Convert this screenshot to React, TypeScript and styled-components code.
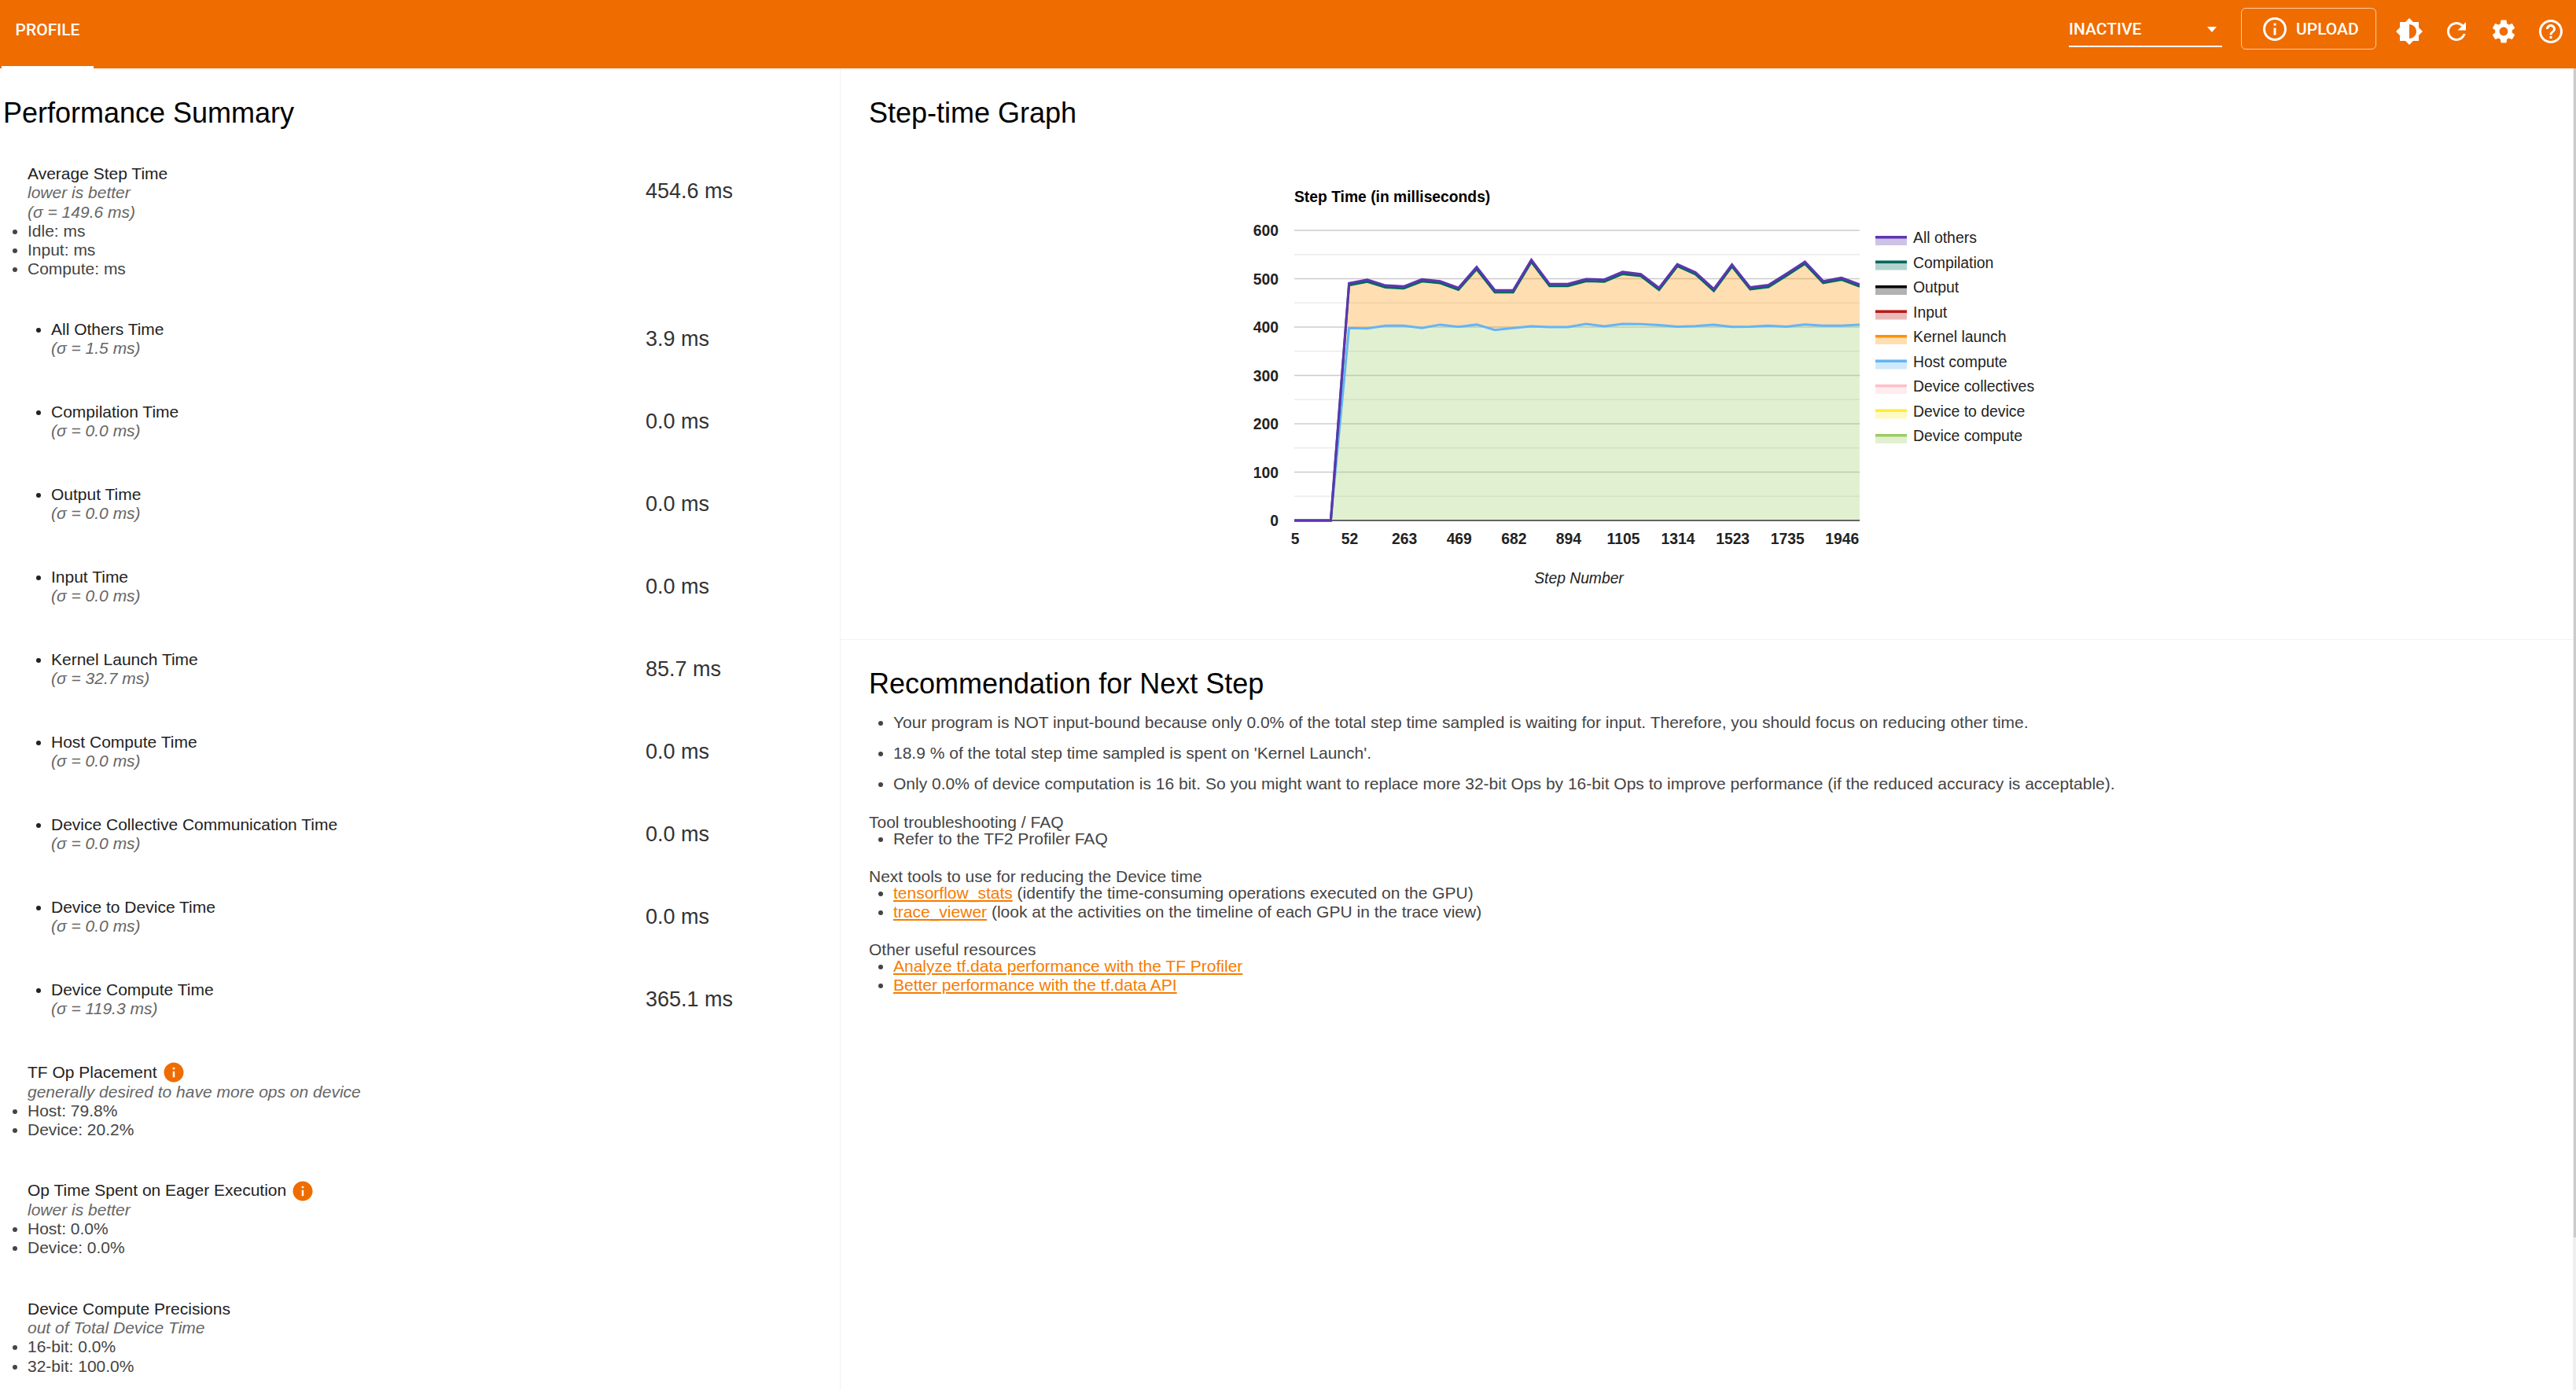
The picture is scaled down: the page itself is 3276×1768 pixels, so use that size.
import React from 'react';
import styled, { createGlobalStyle } from 'styled-components';

const GlobalStyle = createGlobalStyle`
  html, body {
    margin: 0;
    padding: 0;
    background: #fff;
    overflow: hidden;
    font-family: "Liberation Sans", Arial, sans-serif;
  }
`;

const ORANGE = '#ef6c00';

const Shell = styled.div`
  display: flex;
  flex-direction: column;
  height: 1768px;
  overflow: hidden;
`;

const Toolbar = styled.header`
  display: flex;
  justify-content: space-between;
  height: 87px;
  flex: none;
  background: ${ORANGE};
  color: #fff;
  font-family: Roboto, sans-serif;
  font-weight: 500;
`;

const Tab = styled.div`
  width: 117px;
  height: 84px;
  margin-left: 2px;
  border-bottom: 3px solid #fff;
  font-size: 21px;
  line-height: 76px;
  text-align: center;
`;

const ToolbarRight = styled.div`
  display: flex;
  padding-right: 2px;
`;

const RunSelect = styled.div`
  display: flex;
  align-items: center;
  justify-content: space-between;
  box-sizing: border-box;
  width: 195px;
  height: 50px;
  margin: 10px 24px 0 0;
  padding-right: 7px;
  border-bottom: 2px solid #fff;
  font-size: 21px;
  padding-top: 6px;
`;

const DropArrow = styled.span`
  width: 0;
  height: 0;
  border-left: 6.5px solid transparent;
  border-right: 6.5px solid transparent;
  border-top: 7px solid #fff;
`;

const UploadButton = styled.div`
  display: flex;
  align-items: center;
  box-sizing: border-box;
  width: 172px;
  height: 53px;
  margin: 10px 12px 0 0;
  padding-left: 24px;
  gap: 9px;
  border: 1.5px solid rgba(255, 255, 255, 0.65);
  border-radius: 6px;
  font-size: 21px;
`;

const IconButton = styled.div`
  display: flex;
  align-items: center;
  justify-content: center;
  width: 60px;
  height: 80px;
`;

const Glyph = styled.svg`
  display: block;
  width: ${p => p.$size || 36}px;
  height: ${p => p.$size || 36}px;
  fill: ${p => p.$color || '#fff'};
  flex: none;
`;

const Main = styled.main`
  position: relative;
  display: flex;
  flex: 1;
  min-height: 0;
`;

const LeftPanel = styled.section`
  box-sizing: border-box;
  width: 1069px;
  flex: none;
  padding-top: 37px;
  border-right: 1px solid #f2f2f2;
`;

const PanelTitle = styled.h2`
  margin: 0;
  padding-left: ${p => p.$inset || 0}px;
  font-size: 36px;
  font-weight: 400;
  line-height: 40px;
  color: #000;
`;

const Summary = styled.div`
  margin-top: 45px;
  font-size: 21px;
  line-height: 24.3px;
  color: #222;
`;

const AverageRow = styled.div`
  display: grid;
  grid-template-columns: 821px 1fr;
  margin-bottom: 52px;
`;

const StatRows = styled.div`
  display: flex;
  flex-direction: column;
  gap: 56.4px;
  margin-bottom: 57px;
`;

const StatRow = styled.div`
  display: grid;
  grid-template-columns: 821px 1fr;
  align-items: center;
`;

const StatValue = styled.div`
  font-size: 27px;
  line-height: 32px;
  color: #333;
  margin-top: ${p => p.$top || 0}px;
`;

const BlockLabel = styled.div`
  display: flex;
  align-items: center;
  height: 24.3px;
  padding-left: 35px;
`;

const SubNote = styled.div`
  padding-left: ${p => p.$inset || 0}px;
  font-style: italic;
  color: #666;
`;

const DetailList = styled.ul`
  margin: 0;
  padding: 0 0 0 35px;
  color: #444;
`;

const StatList = styled.ul`
  margin: 0;
  padding: 0 0 0 65px;
`;

const BlockStack = styled.div`
  display: flex;
  flex-direction: column;
  gap: 53px;
`;

const InfoBadge = styled.span`
  margin-left: 6px;
`;

const RightPanel = styled.section`
  flex: 1;
  min-width: 0;
`;

const GraphSection = styled.div`
  box-sizing: border-box;
  height: 727px;
  padding: 37px 0 0 36px;
  border-bottom: 1px solid #f2f2f2;
`;

const ChartFrame = styled.svg`
  display: block;
  width: 1100px;
  height: 520px;
  margin: 63px 0 0 455px;
  font-family: "Liberation Sans", Arial, sans-serif;
`;

const RecommendSection = styled.div`
  padding: 36px 0 0 36px;
  font-size: 21px;
  line-height: 24.3px;
  color: #444;
`;

const AdviceList = styled.ul`
  display: flex;
  flex-direction: column;
  gap: 14.7px;
  margin: 17px 0 26.5px;
  padding: 0 0 0 31px;
`;

const ResourceGroups = styled.div`
  display: flex;
  flex-direction: column;
  gap: 25.6px;
`;

const GroupTitle = styled.div`
  line-height: 19px;
`;

const ResourceList = styled.ul`
  margin: 0;
  padding: 0 0 0 31px;
`;

const DocLink = styled.a`
  color: #f57c00;
  text-decoration: underline;
`;

const ScrollTrack = styled.div`
  position: absolute;
  top: 0;
  right: 0;
  bottom: 0;
  width: 4px;
  background: #efefef;
`;

const ScrollThumb = styled.div`
  width: 3px;
  height: 1487px;
  margin-left: 1px;
  background: #cbcbcb;
`;

const PATHS = {
  info: 'M11 7h2v2h-2zm0 4h2v6h-2zm1-9C6.48 2 2 6.48 2 12s4.48 10 10 10 10-4.48 10-10S17.52 2 12 2zm0 18c-4.41 0-8-3.59-8-8s3.59-8 8-8 8 3.59 8 8-3.59 8-8 8z',
  help: 'M11 18h2v-2h-2v2zm1-16C6.48 2 2 6.48 2 12s4.48 10 10 10 10-4.48 10-10S17.52 2 12 2zm0 18c-4.41 0-8-3.59-8-8s3.59-8 8-8 8 3.59 8 8-3.59 8-8 8zm0-14c-2.21 0-4 1.79-4 4h2c0-1.1.9-2 2-2s2 .9 2 2c0 2-3 1.75-3 5h2c0-2.25 3-2.5 3-5 0-2.21-1.79-4-4-4z',
  refresh: 'M17.65 6.35C16.2 4.9 14.21 4 12 4c-4.42 0-7.99 3.58-7.99 8s3.57 8 7.99 8c3.73 0 6.84-2.55 7.73-6h-2.08c-.82 2.33-3.04 4-5.65 4-3.31 0-6-2.69-6-6s2.69-6 6-6c1.66 0 3.14.69 4.22 1.78L13 11h7V4l-2.35 2.35z',
  settings: 'M19.14 12.94c.04-.3.06-.61.06-.94 0-.32-.02-.64-.07-.94l2.03-1.58c.18-.14.23-.41.12-.61l-1.92-3.32c-.12-.22-.37-.29-.59-.22l-2.39.96c-.5-.38-1.03-.7-1.62-.94l-.36-2.54c-.04-.24-.24-.41-.48-.41h-3.84c-.24 0-.43.17-.47.41l-.36 2.54c-.59.24-1.13.57-1.62.94l-2.39-.96c-.22-.08-.47 0-.59.22L2.74 8.87c-.12.21-.08.47.12.61l2.03 1.58c-.05.3-.09.63-.09.94s.02.64.07.94l-2.03 1.58c-.18.14-.23.41-.12.61l1.92 3.32c.12.22.37.29.59.22l2.39-.96c.5.38 1.03.7 1.62.94l.36 2.54c.05.24.24.41.48.41h3.84c.24 0 .44-.17.47-.41l.36-2.54c.59-.24 1.13-.56 1.62-.94l2.39.96c.22.08.47 0 .59-.22l1.92-3.32c.12-.22.07-.47-.12-.61l-2.01-1.58zM12 15.6c-1.98 0-3.6-1.62-3.6-3.6s1.62-3.6 3.6-3.6 3.6 1.62 3.6 3.6-1.62 3.6-3.6 3.6z',
  brightness: 'M20 15.31L23.31 12 20 8.69V4h-4.69L12 .69 8.69 4H4v4.69L.69 12 4 15.31V20h4.69L12 23.31 15.31 20H20v-4.69zM12 18V6c3.31 0 6 2.69 6 6s-2.69 6-6 6z',
  infoFilled: 'M12 2C6.48 2 2 6.48 2 12s4.48 10 10 10 10-4.48 10-10S17.52 2 12 2zm1 15h-2v-6h2v6zm0-8h-2V7h2v2z',
};

const Icon: React.FC<{ name: keyof typeof PATHS; size?: number; color?: string }> = ({ name, size, color }) => (
  <Glyph viewBox="0 0 24 24" $size={size} $color={color}>
    <path d={PATHS[name]} />
  </Glyph>
);

const STATS = [
  { label: 'All Others Time', sigma: '1.5', value: '3.9 ms' },
  { label: 'Compilation Time', sigma: '0.0', value: '0.0 ms' },
  { label: 'Output Time', sigma: '0.0', value: '0.0 ms' },
  { label: 'Input Time', sigma: '0.0', value: '0.0 ms' },
  { label: 'Kernel Launch Time', sigma: '32.7', value: '85.7 ms' },
  { label: 'Host Compute Time', sigma: '0.0', value: '0.0 ms' },
  { label: 'Device Collective Communication Time', sigma: '0.0', value: '0.0 ms' },
  { label: 'Device to Device Time', sigma: '0.0', value: '0.0 ms' },
  { label: 'Device Compute Time', sigma: '119.3', value: '365.1 ms' },
];

const BLOCKS = [
  {
    title: 'TF Op Placement',
    note: 'generally desired to have more ops on device',
    items: ['Host: 79.8%', 'Device: 20.2%'],
    info: true,
  },
  {
    title: 'Op Time Spent on Eager Execution',
    note: 'lower is better',
    items: ['Host: 0.0%', 'Device: 0.0%'],
    info: true,
  },
  {
    title: 'Device Compute Precisions',
    note: 'out of Total Device Time',
    items: ['16-bit: 0.0%', '32-bit: 100.0%'],
    info: false,
  },
];

// chart space: the svg starts at page x 1560, y 227
const PLOT_LEFT = 86;
const PLOT_RIGHT = 805;
const PLOT_ZERO = 435;
const PX_PER_MS = 0.615;
const STEP_X = (PLOT_RIGHT - PLOT_LEFT) / 31;

const TOTAL = [
  0, 0, 0, 490.5, 498, 486, 484, 498.6, 495, 481, 524, 476, 476, 539, 489, 489, 499, 498, 514, 509.5, 481, 530, 513,
  478.6, 529.5, 482, 487, 510.6, 535, 495, 502, 488,
];
const HOST = [
  0, 0, 0, 398, 397, 403, 403, 398, 405, 400.5, 405, 394, 398, 401.6, 400, 400, 406.5, 401.6, 406.5, 406, 404, 401, 402,
  405, 400.5, 401, 403, 401, 405.4, 403, 403, 405,
];
const COMPILE = TOTAL.map(v => (v ? v - 4 : 0));

const X_LABELS = ['5', '52', '263', '469', '682', '894', '1105', '1314', '1523', '1735', '1946'];

const LEGEND = [
  { label: 'All others', color: '#5e35b1' },
  { label: 'Compilation', color: '#00695c' },
  { label: 'Output', color: '#000000' },
  { label: 'Input', color: '#b71c1c' },
  { label: 'Kernel launch', color: '#ff9100' },
  { label: 'Host compute', color: '#64b5f6' },
  { label: 'Device collectives', color: '#ffc0cb' },
  { label: 'Device to device', color: '#ffeb3b' },
  { label: 'Device compute', color: '#9ccc65' },
];

const xAt = (k: number) => PLOT_LEFT + k * STEP_X;
const yAt = (v: number) => PLOT_ZERO - v * PX_PER_MS;
const toLine = (vals: number[]) => vals.map((v, k) => `${xAt(k).toFixed(1)},${yAt(v).toFixed(1)}`).join(' ');
const toBand = (top: number[], bottom: number[]) =>
  `${toLine(top)} ${bottom
    .map((v, k) => `${xAt(k).toFixed(1)},${yAt(v).toFixed(1)}`)
    .reverse()
    .join(' ')}`;

const ZEROS = TOTAL.map(() => 0);

const StepChart: React.FC = () => (
  <ChartFrame viewBox="0 0 1100 520">
    <defs>
      <clipPath id="plot-clip">
        <rect x={PLOT_LEFT} y={0} width={PLOT_RIGHT - PLOT_LEFT} height={PLOT_ZERO + 2} />
      </clipPath>
    </defs>
    <text x={PLOT_LEFT} y={30} fontSize={19.3} fontWeight={700} fill="#000">
      Step Time (in milliseconds)
    </text>
    {Array.from({ length: 12 }, (_, i) => (i + 1) * 50).map(v => (
      <line
        key={v}
        x1={PLOT_LEFT}
        x2={PLOT_RIGHT}
        y1={yAt(v)}
        y2={yAt(v)}
        stroke={v % 100 === 0 ? '#cccccc' : '#ebebeb'}
        strokeWidth={1.5}
      />
    ))}
    {[0, 100, 200, 300, 400, 500, 600].map(v => (
      <text key={v} x={66} y={yAt(v) + 7} fontSize={19.3} fontWeight={700} fill="#222" textAnchor="end">
        {v}
      </text>
    ))}
    {X_LABELS.map((label, i) => (
      <text key={label} x={xAt(i * 3) + 1} y={465} fontSize={19.3} fontWeight={700} fill="#222" textAnchor="middle">
        {label}
      </text>
    ))}
    <text x={448} y={515} fontSize={19.3} fontStyle="italic" fill="#222" textAnchor="middle">
      Step Number
    </text>
    <g clipPath="url(#plot-clip)">
      <polygon points={toBand(HOST, ZEROS)} fill="#9ccc65" fillOpacity={0.3} />
      <polygon points={toBand(COMPILE, HOST)} fill="#ff9100" fillOpacity={0.3} />
      <line x1={PLOT_LEFT} x2={PLOT_RIGHT} y1={PLOT_ZERO} y2={PLOT_ZERO} stroke="#333" strokeWidth={1.5} />
      <polyline points={toLine(HOST)} fill="none" stroke="#64b5f6" strokeWidth={3} />
      <polyline points={toLine(COMPILE)} fill="none" stroke="#00695c" strokeWidth={3} />
      <polyline points={toLine(TOTAL)} fill="none" stroke="#5e35b1" strokeWidth={3} />
    </g>
    {LEGEND.map((item, i) => {
      const top = 73 + i * 31.5;
      return (
        <g key={item.label}>
          <rect x={825} y={top} width={40} height={12} fill={item.color} fillOpacity={0.3} />
          <rect x={825} y={top} width={40} height={3.5} fill={item.color} />
          <text x={873} y={top + 9} fontSize={19.4} fill="#222">
            {item.label}
          </text>
        </g>
      );
    })}
  </ChartFrame>
);

const App: React.FC = () => (
  <>
    <GlobalStyle />
    <Shell>
      <Toolbar>
        <Tab>PROFILE</Tab>
        <ToolbarRight>
          <RunSelect>
            <span>INACTIVE</span>
            <DropArrow />
          </RunSelect>
          <UploadButton>
            <Icon name="info" />
            <span>UPLOAD</span>
          </UploadButton>
          <IconButton>
            <Icon name="brightness" />
          </IconButton>
          <IconButton>
            <Icon name="refresh" />
          </IconButton>
          <IconButton>
            <Icon name="settings" />
          </IconButton>
          <IconButton>
            <Icon name="help" />
          </IconButton>
        </ToolbarRight>
      </Toolbar>
      <Main>
        <LeftPanel>
          <PanelTitle $inset={4}>Performance Summary</PanelTitle>
          <Summary>
            <AverageRow>
              <div>
                <BlockLabel>Average Step Time</BlockLabel>
                <SubNote $inset={35}>lower is better</SubNote>
                <SubNote $inset={35}>(σ = 149.6 ms)</SubNote>
                <DetailList>
                  <li>Idle: ms</li>
                  <li>Input: ms</li>
                  <li>Compute: ms</li>
                </DetailList>
              </div>
              <StatValue $top={18}>454.6 ms</StatValue>
            </AverageRow>
            <StatRows>
              {STATS.map(stat => (
                <StatRow key={stat.label}>
                  <StatList>
                    <li>
                      {stat.label}
                      <SubNote>(σ = {stat.sigma} ms)</SubNote>
                    </li>
                  </StatList>
                  <StatValue>{stat.value}</StatValue>
                </StatRow>
              ))}
            </StatRows>
            <BlockStack>
              {BLOCKS.map(block => (
                <div key={block.title}>
                  <BlockLabel>
                    {block.title}
                    {block.info ? (
                      <InfoBadge>
                        <Icon name="infoFilled" size={30} color={ORANGE} />
                      </InfoBadge>
                    ) : null}
                  </BlockLabel>
                  <SubNote $inset={35}>{block.note}</SubNote>
                  <DetailList>
                    {block.items.map(item => (
                      <li key={item}>{item}</li>
                    ))}
                  </DetailList>
                </div>
              ))}
            </BlockStack>
          </Summary>
        </LeftPanel>
        <RightPanel>
          <GraphSection>
            <PanelTitle>Step-time Graph</PanelTitle>
            <StepChart />
          </GraphSection>
          <RecommendSection>
            <PanelTitle>Recommendation for Next Step</PanelTitle>
            <AdviceList>
              <li>
                Your program is NOT input-bound because only 0.0% of the total step time sampled is waiting for input.
                Therefore, you should focus on reducing other time.
              </li>
              <li>18.9 % of the total step time sampled is spent on 'Kernel Launch'.</li>
              <li>
                Only 0.0% of device computation is 16 bit. So you might want to replace more 32-bit Ops by 16-bit Ops to
                improve performance (if the reduced accuracy is acceptable).
              </li>
            </AdviceList>
            <ResourceGroups>
              <div>
                <GroupTitle>Tool troubleshooting / FAQ</GroupTitle>
                <ResourceList>
                  <li>Refer to the TF2 Profiler FAQ</li>
                </ResourceList>
              </div>
              <div>
                <GroupTitle>Next tools to use for reducing the Device time</GroupTitle>
                <ResourceList>
                  <li>
                    <DocLink href="#">tensorflow_stats</DocLink> (identify the time-consuming operations executed on the
                    GPU)
                  </li>
                  <li>
                    <DocLink href="#">trace_viewer</DocLink> (look at the activities on the timeline of each GPU in the
                    trace view)
                  </li>
                </ResourceList>
              </div>
              <div>
                <GroupTitle>Other useful resources</GroupTitle>
                <ResourceList>
                  <li>
                    <DocLink href="#">Analyze tf.data performance with the TF Profiler</DocLink>
                  </li>
                  <li>
                    <DocLink href="#">Better performance with the tf.data API</DocLink>
                  </li>
                </ResourceList>
              </div>
            </ResourceGroups>
          </RecommendSection>
        </RightPanel>
        <ScrollTrack>
          <ScrollThumb />
        </ScrollTrack>
      </Main>
    </Shell>
  </>
);

export default App;
